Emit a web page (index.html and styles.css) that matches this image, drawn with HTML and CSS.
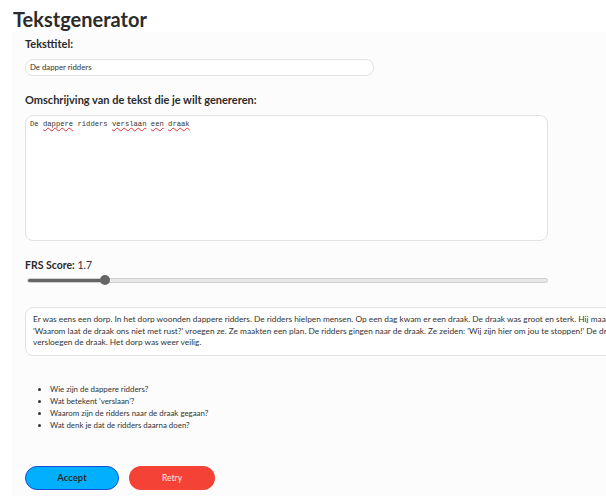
FILE: index.html
```html
<!DOCTYPE html>
<html lang="nl">
<head>
<meta charset="UTF-8">
<meta name="viewport" content="width=device-width, initial-scale=1.0">
<title>Tekstgenerator</title>
<link rel="stylesheet" href="styles.css">
</head>
<body>
<h1 class="page-title">Tekstgenerator</h1>
<div class="page">
    <label class="field-label" for="title">Teksttitel:</label>
    <div class="text-input" id="title">De dapper ridders</div>

    <label class="field-label wide" for="desc">Omschrijving van de tekst die je wilt genereren:</label>
    <div class="text-area" id="desc">De <span class="typo">dappere</span> ridders <span class="typo">verslaan</span> <span class="typo">een</span> <span class="typo">draak</span></div>

    <div class="score"><b>FRS Score:</b> 1.7</div>
    <div class="slider">
        <div class="slider-fill"></div>
        <div class="slider-thumb"></div>
    </div>

    <div class="story">
        <p>Er was eens een dorp. In het dorp woonden dappere ridders. De ridders hielpen mensen. Op een dag kwam er een draak. De draak was groot en sterk. Hij maakte alles kapot.<br>
        'Waarom laat de draak ons niet met rust?' vroegen ze. Ze maakten een plan. De ridders gingen naar de draak. Ze zeiden: 'Wij zijn hier om jou te stoppen!' De draak werd boos. Ze<br>
        versloegen de draak. Het dorp was weer veilig.</p>
    </div>

    <ul class="questions">
        <li>Wie zijn de dappere ridders?</li>
        <li>Wat betekent 'verslaan'?</li>
        <li>Waarom zijn de ridders naar de draak gegaan?</li>
        <li>Wat denk je dat de ridders daarna doen?</li>
    </ul>

    <div class="actions">
        <button class="btn btn-accept">Accept</button>
        <button class="btn btn-retry">Retry</button>
    </div>
</div>
</body>
</html>
```

FILE: styles.css
```css
html, body {
    overflow-x: hidden;
}
body {
    font-family: 'Lato', 'Open Sans', sans-serif;
    background-color: #fff;
    color: #333;
    margin: 0;
    padding: 0;
}
.page-title {
    font-size: 20px;
    font-weight: 700;
    line-height: 26px;
    margin: 6px 0 0 13px;
    color: #2b2b2b;
}
.page {
    margin-left: 12px;
    padding: 2px 0 8px 13px;
    background-color: #fcfcfd;
    display: flex;
    flex-direction: column;
    align-items: flex-start;
}
.field-label {
    font-size: 11px;
    font-weight: 700;
    line-height: 16px;
    color: #2b2b2b;
    margin-top: 2px;
}
.field-label.wide {
    font-size: 11px;
    margin-top: 16px;
}
.text-input {
    width: 343px;
    height: 15px;
    margin-top: 7px;
    border: 1px solid #e2e2e2;
    border-radius: 8px;
    background-color: #fff;
    font-size: 7.8px;
    line-height: 15px;
    padding-left: 4px;
}
.text-area {
    width: 513px;
    height: 118px;
    margin-top: 7px;
    padding: 3px 4px;
    border: 1px solid #e2e2e2;
    border-radius: 8px;
    background-color: #fff;
    font-family: 'Liberation Mono', monospace;
    font-size: 7.2px;
    line-height: 10px;
}
.typo {
    text-decoration: underline wavy #e03030;
    text-decoration-thickness: 1px;
    text-underline-offset: 1px;
}
.score {
    margin-top: 17px;
    font-size: 10.5px;
    line-height: 14px;
}
.score b {
    color: #2b2b2b;
}
.slider {
    position: relative;
    width: 519px;
    height: 3px;
    margin: 6px 0 0 2px;
    border: 1px solid #cfcfcf;
    border-radius: 3px;
    background-color: #e8e8e8;
}
.slider-fill {
    width: 76px;
    height: 100%;
    background-color: #666;
    border-radius: 3px;
}
.slider-thumb {
    position: absolute;
    left: 72px;
    top: -4px;
    width: 10px;
    height: 10px;
    border-radius: 50%;
    background-color: #666;
}
.story {
    width: 720px;
    margin-top: 24px;
    padding: 6px 7px;
    border: 1px solid #e2e2e2;
    border-radius: 8px;
    background-color: #fff;
    font-size: 8.3px;
    line-height: 11.5px;
    white-space: nowrap;
}
.story p {
    margin: 0;
}
.questions {
    margin: 27px 0 0 0;
    padding-left: 25px;
    font-size: 7.9px;
    line-height: 12px;
}
.actions {
    display: flex;
    gap: 10px;
    margin-top: 35px;
}
.btn {
    height: 24px;
    border-radius: 12px;
    font-family: 'Lato', sans-serif;
    cursor: pointer;
}
.btn-accept {
    width: 94px;
    background-color: #00b0ff;
    border: 1.5px solid #1c4bd6;
    color: #2b2b2b;
    font-size: 9.5px;
    font-weight: 700;
}
.btn-retry {
    width: 86px;
    background-color: #f44336;
    border: none;
    color: #fde8e6;
    font-size: 8.5px;
}
```
